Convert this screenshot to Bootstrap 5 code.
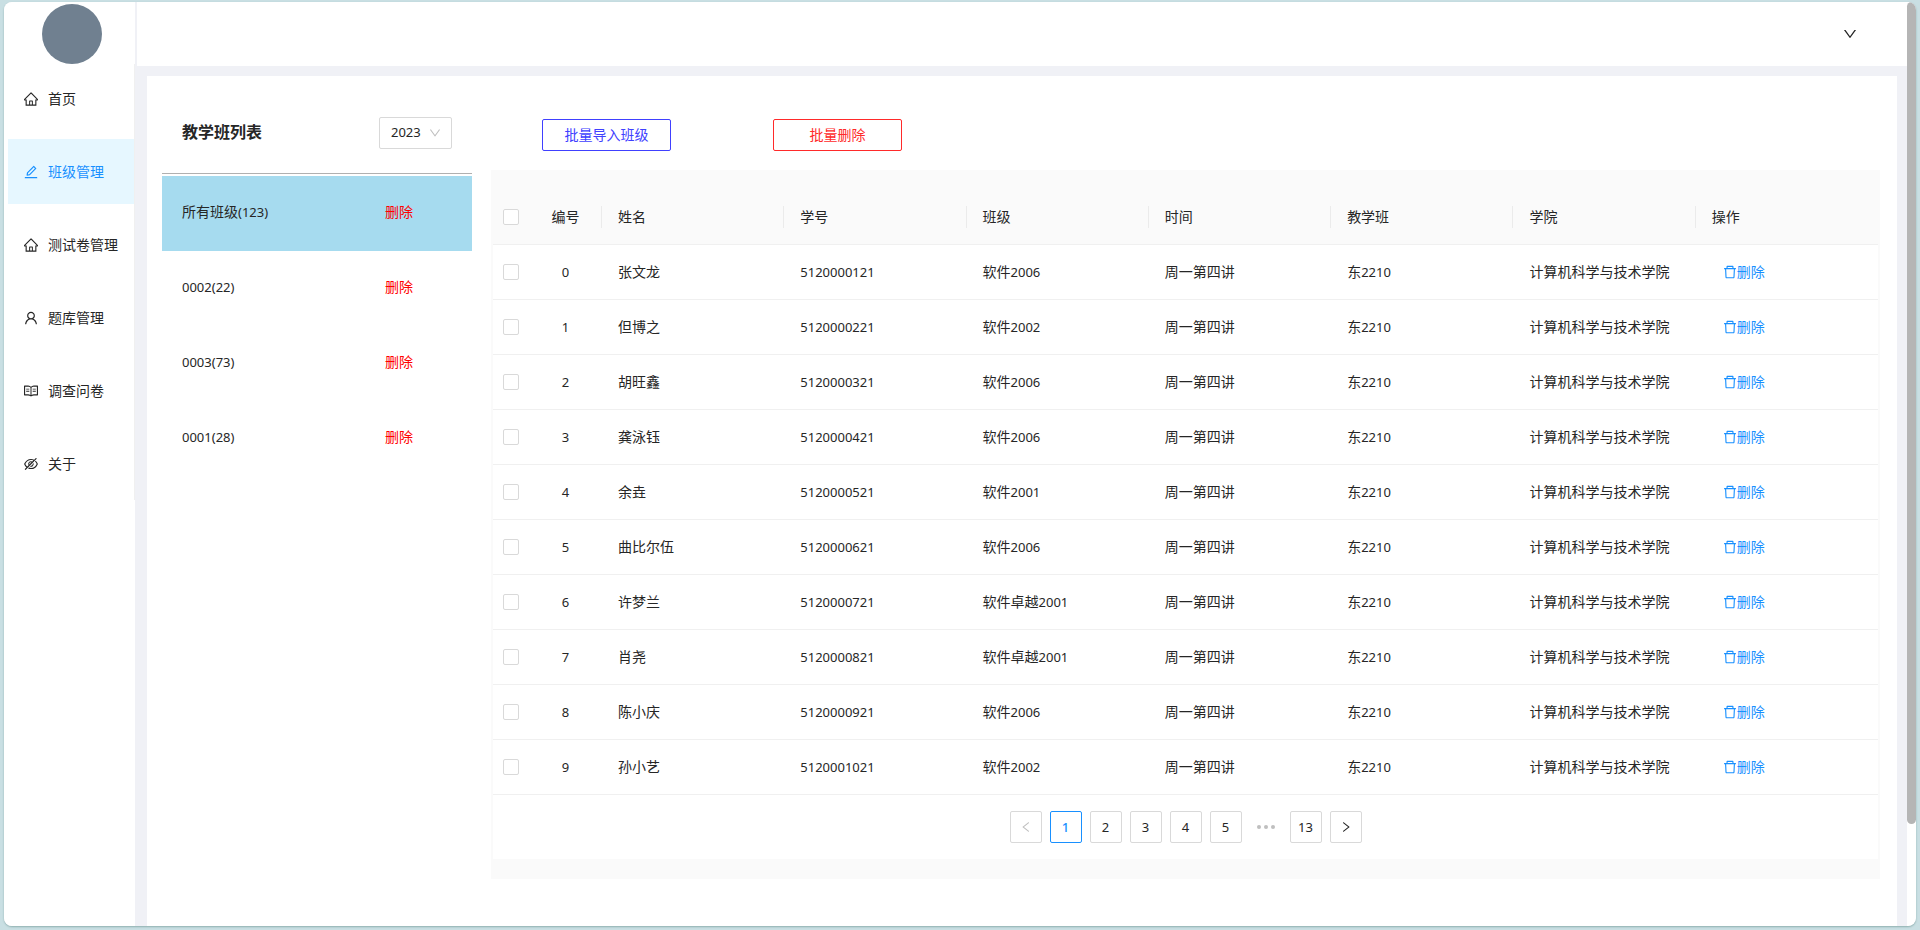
<!DOCTYPE html>
<html lang="zh-CN">
<head>
<meta charset="utf-8">
<meta name="viewport" content="width=device-width, initial-scale=1">
<title>班级管理</title>
<link href="https://cdn.jsdelivr.net/npm/bootstrap@5.3.0/dist/css/bootstrap.min.css" rel="stylesheet">
<style>
  :root { --ink: #262626; --blue: #1890ff; --line: #f0f0f0; --edge: #d9d9d9; }
  body { background: #c9dfe3; color: var(--ink); font-family: "Liberation Sans", "Noto Sans CJK SC", sans-serif; font-size: 14px; line-height: 22px; padding: 2px 4px 4px; }
  .shell { min-height: calc(100vh - 6px); background: #f0f1f6; border-radius: 8px; box-shadow: 0 1px 2px #8fb0b0; }
  .num { font-family: "Noto Sans", sans-serif; font-size: 13px; }
  .icon { width: 14px; height: 14px; fill: currentColor; flex: none; }
  .icon-sm { width: 12px; height: 12px; }

  .side { width: 131px; flex: none; }
  .avatar { width: 60px; height: 60px; background: #708090; margin: 2px auto 0 38px; }
  .menu { padding: 2px 0 4px 4px; border-right: 1px solid var(--line); gap: 8px; }
  .menu .nav-link { height: 65px; padding: 0 0 0 16px; gap: 10px; color: var(--ink); }
  .menu .nav-link.active { background: #e6f7ff; color: var(--blue); }

  .main { margin-left: 2px; }
  .topbar { height: 64px; padding-right: 50px; }
  .panel { margin: 10px 10px 0 10px; padding: 0 17px 47px 15px; gap: 19px; }

  .classes { width: 310px; flex: none; }
  .classes-head { height: 98px; padding: 16px 20px 0 20px; border-bottom: 1px solid #b0b0b0; margin-bottom: 2px; }
  .classes-head h1 { font-size: 16px; line-height: 24px; font-weight: 700; }
  .year { width: 73px; height: 32px; padding: 0 11px; font-size: 13px; font-family: "Noto Sans", sans-serif; color: var(--ink); border: 1px solid var(--edge); border-radius: 2px; background-size: 12px 12px; background-position: right 10px center;
    --bs-form-select-bg-img: url("data:image/svg+xml,%3csvg xmlns='http://www.w3.org/2000/svg' viewBox='64 64 896 896'%3e%3cpath fill='%23bfbfbf' d='M884 256h-75c-5.1 0-9.9 2.5-12.9 6.6L512 654.2 227.9 262.6c-3-4.1-7.8-6.6-12.9-6.6h-75c-6.5 0-10.3 7.4-6.5 12.7l352.6 486.1c12.8 17.6 39 17.6 51.7 0l352.6-486.1c3.9-5.3.1-12.7-6.4-12.7z'/%3e%3c/svg%3e");
    background-image: var(--bs-form-select-bg-img); }
  .class-row { height: 75px; padding: 0 59px 3px 20px; }
  .class-row.active { background: #a6dbef; }
  .class-row button { color: #f00; }
  .plain { border: 0; background: none; padding: 0; }

  .actions { padding: 43px 51px 19px; gap: 102px; }
  .actions .btn { width: 129px; height: 32px; padding: 0; font-size: 14px; line-height: 22px; border-radius: 2px; }
  .btn-import { color: #4040ff; border-color: #4040ff; }
  .btn-remove { color: #ff2a2a; border-color: #ff2a2a; }
  .sheet { background: #fafafa; padding: 20px 2px; }
  .sheet table { table-layout: fixed; margin: 0; color: var(--ink); border-collapse: separate; border-spacing: 0; }
  .sheet th, .sheet td { height: 55px; padding: 0 16px; font-weight: 400; vertical-align: middle; border-bottom: 1px solid var(--line); }
  .sheet thead th { background: #fafafa; }
  .sheet tbody td { background: #fff; }
  .sheet thead th.split { background: linear-gradient(#ebebeb, #ebebeb) right center / 1px 22px no-repeat #fafafa; }
  .sheet .tick { padding: 0; text-align: center; line-height: 16px; }
  .sheet .form-check-input { width: 16px; height: 16px; margin: 0; border: 1px solid var(--edge); border-radius: 2px; vertical-align: top; }
  .col-tick { width: 36px; }
  .col-no { width: 73px; }
  .drop { color: var(--blue); text-decoration: none; padding-left: 11px; }

  .pager { padding: 16px; gap: 8px; background: #fff; }
  .pager .page-item .page-link { width: 32px; height: 32px; padding: 0; border: 1px solid var(--edge); border-radius: 2px; color: var(--ink); font: 13px/22px "Noto Sans", sans-serif; margin: 0; display: flex; align-items: center; justify-content: center; }
  .pager .page-item.active .page-link { background: #fff; border-color: var(--blue); color: var(--blue); font-weight: 500; }
  .pager .page-item.disabled .page-link { background: #fff; color: #bfbfbf; }
  .pager .more { width: 32px; height: 32px; fill: #bfbfbf; }

  .rail { width: 9px; flex: none; background: #fff; border-radius: 0 8px 8px 0; }
  .thumb { height: 89%; background: #b5b5b5; border-radius: 5px; }
</style>
</head>
<body>
<svg class="d-none" xmlns="http://www.w3.org/2000/svg">
  <symbol id="home" viewBox="64 64 896 896"><path d="M946.5 505L560.1 118.8l-25.9-25.9a31.5 31.5 0 00-44.4 0L77.5 505a63.9 63.9 0 00-18.8 46c.4 35.2 29.7 63.3 64.9 63.3h42.5V940h691.8V614.3h43.4c17.1 0 33.2-6.7 45.3-18.8a63.6 63.6 0 0018.7-45.3c0-17-6.7-33.1-18.8-45.2zM568 868H456V664h112v204zm217.9-325.7V868H632V640c0-22.1-17.9-40-40-40H432c-22.1 0-40 17.9-40 40v228H238.1V542.3h-96l370-369.7 23.1 23.1L882 542.3h-96.1z"/></symbol>
  <symbol id="edit" viewBox="64 64 896 896"><path d="M257.7 752c2 0 4-.2 6-.5L431.9 722c2-.4 3.9-1.3 5.3-2.8l423.9-423.9a9.96 9.96 0 000-14.1L694.9 114.9c-1.9-1.9-4.4-2.9-7.1-2.9s-5.2 1-7.1 2.9L256.8 538.8c-1.5 1.5-2.4 3.3-2.8 5.3l-29.5 168.2a33.5 33.5 0 009.4 29.8c6.6 6.4 14.9 9.9 23.8 9.9zm67.4-174.4L687.8 215l73.3 73.3-362.7 362.6-88.9 15.7 15.6-89zM880 836H144c-17.7 0-32 14.3-32 32v36c0 4.4 3.6 8 8 8h784c4.4 0 8-3.6 8-8v-36c0-17.7-14.3-32-32-32z"/></symbol>
  <symbol id="user" viewBox="64 64 896 896"><path d="M858.5 763.6a374 374 0 00-80.6-119.5 375.63 375.63 0 00-119.5-80.6c-.4-.2-.8-.3-1.2-.5C719.5 518 760 444.7 760 362c0-137-111-248-248-248S264 225 264 362c0 82.7 40.5 156 102.8 201.1-.4.2-.8.3-1.2.5-44.8 18.9-85 46-119.5 80.6a375.63 375.63 0 00-80.6 119.5A371.7 371.7 0 00136 901.8a8 8 0 008 8.2h60c4.4 0 7.9-3.5 8-7.8 2-77.2 33-149.5 87.8-204.3 56.7-56.7 132-87.9 212.2-87.9s155.5 31.2 212.2 87.9C779 752.7 810 825 812 902.2c.1 4.4 3.6 7.8 8 7.8h60a8 8 0 008-8.2c-1-47.8-10.9-94.3-29.5-138.2zM512 534c-45.9 0-89.1-17.9-121.6-50.4S340 407.9 340 362c0-45.9 17.9-89.1 50.4-121.6S466.1 190 512 190s89.1 17.9 121.6 50.4S684 316.1 684 362c0 45.9-17.9 89.1-50.4 121.6S557.9 534 512 534z"/></symbol>
  <symbol id="book" viewBox="64 64 896 896"><path d="M928 161H699.2c-49.1 0-97.1 14.1-138.4 40.7L512 233l-48.8-31.3A255.2 255.2 0 00324.8 161H96c-17.7 0-32 14.3-32 32v568c0 17.7 14.3 32 32 32h228.8c49.1 0 97.1 14.1 138.4 40.7l44.4 28.6c1.3.8 2.8 1.3 4.3 1.3s3-.4 4.3-1.3l44.4-28.6C602 807.1 650.1 793 699.2 793H928c17.7 0 32-14.3 32-32V193c0-17.7-14.3-32-32-32zM324.8 721H136V233h188.8c35.4 0 69.8 10.1 99.5 29.2l48.8 31.3 6.9 4.5v462c-47.6-25.6-100.8-39-155.2-39zm563.2 0H699.2c-54.4 0-107.6 13.4-155.2 39V298l6.9-4.5 48.8-31.3c29.7-19.1 64.1-29.2 99.5-29.2H888v488zM204 361h200v60H204zM620 361h200v60H620zM204 501h200v60H204zM620 501h200v60H620z"/></symbol>
  <symbol id="hidden-eye" viewBox="64 64 896 896"><path d="M942.2 486.2Q889.47 375.11 816.7 305l-50.88 50.88C807.31 395.53 843.45 447.4 874.7 512 791.5 684.2 673.4 766 512 766q-72.67 0-133.87-22.38L323 798.75Q408 838 512 838q288.3 0 430.2-300.3a60.29 60.29 0 000-51.5zm-63.57-320.64L836 122.88a8 8 0 00-11.32 0L715.31 232.2Q624.86 186 512 186q-288.3 0-430.2 300.3a60.3 60.3 0 000 51.5q56.69 119.4 136.5 191.41L112.48 835a8 8 0 000 11.31L155.17 889a8 8 0 0011.31 0l712.15-712.12a8 8 0 000-11.32zM149.3 512C232.6 339.8 350.7 258 512 258c54.54 0 104.13 9.36 149.12 28.39l-70.3 70.3a176 176 0 00-238.13 238.13l-83.42 83.42C223.1 637.49 183.3 582.28 149.3 512zm246.7 0a112.11 112.11 0 01146.2-106.69L401.31 546.2A112 112 0 01396 512z"/><path d="M508 624c-3.46 0-6.87-.16-10.25-.47l-52.82 52.82a176.09 176.09 0 00227.42-227.42l-52.82 52.82c.31 3.38.47 6.79.47 10.25a111.94 111.94 0 01-112 112z"/></symbol>
  <symbol id="trash" viewBox="64 64 896 896"><path d="M360 184h-8c4.4 0 8-3.6 8-8v8h304v-8c0 4.4 3.6 8 8 8h-8v72h72v-80c0-35.3-28.7-64-64-64H352c-35.3 0-64 28.7-64 64v80h72v-72zm504 72H160c-17.7 0-32 14.3-32 32v32c0 4.4 3.6 8 8 8h60.4l24.7 523c1.6 34.1 29.8 61 63.9 61h454c34.2 0 62.3-26.8 63.9-61l24.7-523H888c4.4 0 8-3.6 8-8v-32c0-17.7-14.3-32-32-32zM731.3 840H292.7l-24.2-512h487l-24.2 512z"/></symbol>
  <symbol id="down" viewBox="64 64 896 896"><path d="M884 256h-75c-5.1 0-9.9 2.5-12.9 6.6L512 654.2 227.9 262.6c-3-4.1-7.8-6.6-12.9-6.6h-75c-6.5 0-10.3 7.4-6.5 12.7l352.6 486.1c12.8 17.6 39 17.6 51.7 0l352.6-486.1c3.9-5.3.1-12.7-6.4-12.7z"/></symbol>
  <symbol id="left" viewBox="64 64 896 896"><path d="M724 218.3V141c0-6.7-7.7-10.4-12.9-6.3L260.3 486.8a31.86 31.86 0 000 50.3l450.8 352.1c5.3 4.1 12.9.4 12.9-6.3v-77.3c0-4.9-2.3-9.6-6.1-12.6l-360-281 360-281.1c3.8-3 6.1-7.7 6.1-12.6z"/></symbol>
  <symbol id="right" viewBox="64 64 896 896"><path d="M765.7 486.8L314.9 134.7A7.97 7.97 0 00302 141v77.3c0 4.9 2.3 9.6 6.1 12.6l360 281.1-360 281.1c-3.9 3-6.1 7.7-6.1 12.6V883c0 6.7 7.7 10.4 12.9 6.3l450.8-352.1a31.96 31.96 0 000-50.4z"/></symbol>
</svg>

<div class="shell d-flex overflow-hidden">
  <aside class="side bg-white">
    <div class="avatar rounded-circle"></div>
    <nav class="menu nav flex-column">
      <a class="nav-link d-flex align-items-center" href="#"><svg class="icon"><use href="#home"/></svg>首页</a>
      <a class="nav-link d-flex align-items-center active" href="#" aria-current="page"><svg class="icon"><use href="#edit"/></svg>班级管理</a>
      <a class="nav-link d-flex align-items-center" href="#"><svg class="icon"><use href="#home"/></svg>测试卷管理</a>
      <a class="nav-link d-flex align-items-center" href="#"><svg class="icon"><use href="#user"/></svg>题库管理</a>
      <a class="nav-link d-flex align-items-center" href="#"><svg class="icon"><use href="#book"/></svg>调查问卷</a>
      <a class="nav-link d-flex align-items-center" href="#"><svg class="icon"><use href="#hidden-eye"/></svg>关于</a>
    </nav>
  </aside>

  <div class="main d-flex flex-column flex-grow-1">
    <header class="topbar bg-white d-flex align-items-center justify-content-end">
      <button class="plain d-flex text-reset" type="button" aria-label="用户菜单"><svg class="icon"><use href="#down"/></svg></button>
    </header>

    <main class="panel bg-white d-flex flex-grow-1">
      <section class="classes">
        <div class="classes-head d-flex align-items-center justify-content-between">
          <h1 class="m-0">教学班列表</h1>
          <select class="year form-select" aria-label="年份"><option>2023</option></select>
        </div>
        <ul class="list-unstyled m-0">
          <li class="class-row active d-flex align-items-center justify-content-between"><span>所有班级<span class="num">(123)</span></span><button class="plain" type="button">删除</button></li>
          <li class="class-row d-flex align-items-center justify-content-between"><span class="num">0002(22)</span><button class="plain" type="button">删除</button></li>
          <li class="class-row d-flex align-items-center justify-content-between"><span class="num">0003(73)</span><button class="plain" type="button">删除</button></li>
          <li class="class-row d-flex align-items-center justify-content-between"><span class="num">0001(28)</span><button class="plain" type="button">删除</button></li>
        </ul>
      </section>

      <section class="flex-grow-1">
        <div class="actions d-flex">
          <button class="btn btn-import" type="button">批量导入班级</button>
          <button class="btn btn-remove" type="button">批量删除</button>
        </div>
        <div class="sheet">
          <table class="w-100">
            <colgroup><col class="col-tick"><col class="col-no"><col><col><col><col><col><col><col></colgroup>
            <thead>
              <tr><th class="tick"><input class="form-check-input" type="checkbox" aria-label="全选"></th><th class="split text-center">编号</th><th class="split">姓名</th><th class="split">学号</th><th class="split">班级</th><th class="split">时间</th><th class="split">教学班</th><th class="split">学院</th><th>操作</th></tr>
            </thead>
            <tbody>
              <tr><td class="tick"><input class="form-check-input" type="checkbox" aria-label="选择 0"></td><td class="num text-center">0</td><td>张文龙</td><td class="num">5120000121</td><td>软件<span class="num">2006</span></td><td>周一第四讲</td><td>东<span class="num">2210</span></td><td>计算机科学与技术学院</td><td><a class="drop d-flex align-items-center" href="#"><svg class="icon"><use href="#trash"/></svg>删除</a></td></tr>
              <tr><td class="tick"><input class="form-check-input" type="checkbox" aria-label="选择 1"></td><td class="num text-center">1</td><td>但博之</td><td class="num">5120000221</td><td>软件<span class="num">2002</span></td><td>周一第四讲</td><td>东<span class="num">2210</span></td><td>计算机科学与技术学院</td><td><a class="drop d-flex align-items-center" href="#"><svg class="icon"><use href="#trash"/></svg>删除</a></td></tr>
              <tr><td class="tick"><input class="form-check-input" type="checkbox" aria-label="选择 2"></td><td class="num text-center">2</td><td>胡旺鑫</td><td class="num">5120000321</td><td>软件<span class="num">2006</span></td><td>周一第四讲</td><td>东<span class="num">2210</span></td><td>计算机科学与技术学院</td><td><a class="drop d-flex align-items-center" href="#"><svg class="icon"><use href="#trash"/></svg>删除</a></td></tr>
              <tr><td class="tick"><input class="form-check-input" type="checkbox" aria-label="选择 3"></td><td class="num text-center">3</td><td>龚泳钰</td><td class="num">5120000421</td><td>软件<span class="num">2006</span></td><td>周一第四讲</td><td>东<span class="num">2210</span></td><td>计算机科学与技术学院</td><td><a class="drop d-flex align-items-center" href="#"><svg class="icon"><use href="#trash"/></svg>删除</a></td></tr>
              <tr><td class="tick"><input class="form-check-input" type="checkbox" aria-label="选择 4"></td><td class="num text-center">4</td><td>余垚</td><td class="num">5120000521</td><td>软件<span class="num">2001</span></td><td>周一第四讲</td><td>东<span class="num">2210</span></td><td>计算机科学与技术学院</td><td><a class="drop d-flex align-items-center" href="#"><svg class="icon"><use href="#trash"/></svg>删除</a></td></tr>
              <tr><td class="tick"><input class="form-check-input" type="checkbox" aria-label="选择 5"></td><td class="num text-center">5</td><td>曲比尔伍</td><td class="num">5120000621</td><td>软件<span class="num">2006</span></td><td>周一第四讲</td><td>东<span class="num">2210</span></td><td>计算机科学与技术学院</td><td><a class="drop d-flex align-items-center" href="#"><svg class="icon"><use href="#trash"/></svg>删除</a></td></tr>
              <tr><td class="tick"><input class="form-check-input" type="checkbox" aria-label="选择 6"></td><td class="num text-center">6</td><td>许梦兰</td><td class="num">5120000721</td><td>软件卓越<span class="num">2001</span></td><td>周一第四讲</td><td>东<span class="num">2210</span></td><td>计算机科学与技术学院</td><td><a class="drop d-flex align-items-center" href="#"><svg class="icon"><use href="#trash"/></svg>删除</a></td></tr>
              <tr><td class="tick"><input class="form-check-input" type="checkbox" aria-label="选择 7"></td><td class="num text-center">7</td><td>肖尧</td><td class="num">5120000821</td><td>软件卓越<span class="num">2001</span></td><td>周一第四讲</td><td>东<span class="num">2210</span></td><td>计算机科学与技术学院</td><td><a class="drop d-flex align-items-center" href="#"><svg class="icon"><use href="#trash"/></svg>删除</a></td></tr>
              <tr><td class="tick"><input class="form-check-input" type="checkbox" aria-label="选择 8"></td><td class="num text-center">8</td><td>陈小庆</td><td class="num">5120000921</td><td>软件<span class="num">2006</span></td><td>周一第四讲</td><td>东<span class="num">2210</span></td><td>计算机科学与技术学院</td><td><a class="drop d-flex align-items-center" href="#"><svg class="icon"><use href="#trash"/></svg>删除</a></td></tr>
              <tr><td class="tick"><input class="form-check-input" type="checkbox" aria-label="选择 9"></td><td class="num text-center">9</td><td>孙小艺</td><td class="num">5120001021</td><td>软件<span class="num">2002</span></td><td>周一第四讲</td><td>东<span class="num">2210</span></td><td>计算机科学与技术学院</td><td><a class="drop d-flex align-items-center" href="#"><svg class="icon"><use href="#trash"/></svg>删除</a></td></tr>
            </tbody>
          </table>
          <ul class="pager pagination justify-content-center m-0">
            <li class="page-item disabled"><a class="page-link" href="#" aria-label="上一页"><svg class="icon icon-sm"><use href="#left"/></svg></a></li>
            <li class="page-item active"><a class="page-link" href="#">1</a></li>
            <li class="page-item"><a class="page-link" href="#">2</a></li>
            <li class="page-item"><a class="page-link" href="#">3</a></li>
            <li class="page-item"><a class="page-link" href="#">4</a></li>
            <li class="page-item"><a class="page-link" href="#">5</a></li>
            <li class="d-flex"><svg class="more" viewBox="0 0 32 32"><circle cx="9" cy="16" r="2"/><circle cx="16" cy="16" r="2"/><circle cx="23" cy="16" r="2"/></svg></li>
            <li class="page-item"><a class="page-link" href="#">13</a></li>
            <li class="page-item"><a class="page-link" href="#" aria-label="下一页"><svg class="icon icon-sm"><use href="#right"/></svg></a></li>
          </ul>
        </div>
      </section>
    </main>
  </div>
  <div class="rail" aria-hidden="true"><div class="thumb"></div></div>
</div>
<script src="https://cdn.jsdelivr.net/npm/bootstrap@5.3.0/dist/js/bootstrap.bundle.min.js"></script>
</body>
</html>
